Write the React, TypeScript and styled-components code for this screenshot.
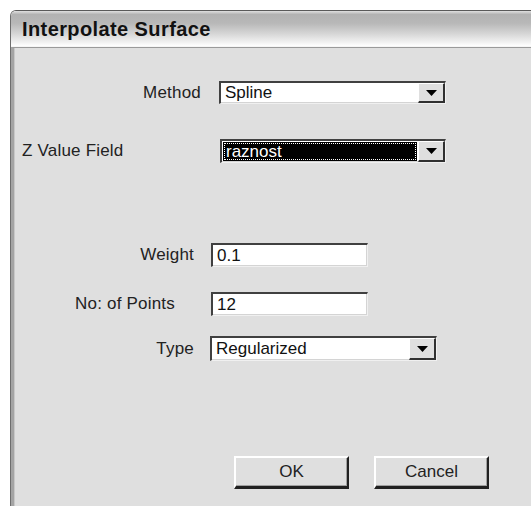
import React from "react";
import styled, { createGlobalStyle } from "styled-components";

const GlobalStyle = createGlobalStyle`
  html, body {
    margin: 0;
    padding: 0;
    background: #ffffff;
    overflow: hidden;
  }
  body {
    font-family: "Liberation Sans", Arial, sans-serif;
  }
`;

const Window = styled.div`
  margin: 10px 0 0 10px;
  width: 540px;
  height: 496px;
  display: flex;
  flex-direction: column;
  border-top: 1px solid #5a5a5a;
  border-left: 1px solid #6e6e6e;
  border-top-left-radius: 6px;
  overflow: hidden;
`;

const TitleBar = styled.div`
  height: 35px;
  display: flex;
  align-items: center;
  padding-left: 11px;
  background: linear-gradient(
    to bottom,
    #e0e0e0 0%,
    #b2b2b2 10%,
    #b8b8b8 35%,
    #d6d6d6 65%,
    #f2f2f2 90%,
    #ffffff 100%
  );
  border-bottom: 1px solid #f6f6f6;
`;

const Title = styled.span`
  font-size: 20px;
  font-weight: bold;
  letter-spacing: 0.4px;
  color: #111111;
  padding-top: 2px;
`;

const Body = styled.div`
  flex: 1;
  background: #dfdfdf;
  border-top: 1px solid #9a9a9a;
  border-left: 3px solid #a4a4a4;
  box-shadow: inset 1px 0 0 #c8c8c8;
  padding-top: 33px;
`;

const Row = styled.div<{ $top: number }>`
  display: flex;
  align-items: center;
  margin-top: ${(p) => p.$top}px;
`;

const Label = styled.label<{ $width: number; $gap: number; $align?: string; $pad?: number }>`
  box-sizing: border-box;
  width: ${(p) => p.$width}px;
  margin-right: ${(p) => p.$gap}px;
  padding-left: ${(p) => p.$pad ?? 0}px;
  text-align: ${(p) => p.$align ?? "right"};
  font-size: 17px;
  letter-spacing: 0.2px;
  color: #222222;
  white-space: nowrap;
`;

const Sunken = styled.div<{ $width: number; $height: number }>`
  box-sizing: border-box;
  width: ${(p) => p.$width}px;
  height: ${(p) => p.$height}px;
  display: flex;
  align-items: stretch;
  background: #ffffff;
  border-top: 2px solid #404040;
  border-left: 2px solid #404040;
  border-right: 1px solid #f0f0f0;
  border-bottom: 1px solid #f0f0f0;
  box-shadow: inset -1px -1px 0 #d4d4d4;
`;

const FieldText = styled.div<{ $selected?: boolean }>`
  flex: 1;
  display: flex;
  align-items: center;
  padding-left: 3px;
  margin: 1px;
  font-size: 17px;
  color: ${(p) => (p.$selected ? "#ffffff" : "#111111")};
  background: ${(p) => (p.$selected ? "#000000" : "transparent")};
  outline: ${(p) => (p.$selected ? "1px dotted #ffffff" : "none")};
  outline-offset: -2px;
`;

const DropButton = styled.div`
  box-sizing: border-box;
  width: 27px;
  display: flex;
  align-items: center;
  justify-content: center;
  background: #dfdfdf;
  border-top: 1px solid #ffffff;
  border-left: 1px solid #ffffff;
  border-right: 2px solid #303030;
  border-bottom: 2px solid #303030;
`;

const ButtonRow = styled.div`
  display: flex;
  gap: 25px;
  padding-left: 220px;
  margin-top: 95px;
`;

const PushButton = styled.button`
  box-sizing: border-box;
  width: 115px;
  height: 33px;
  background: #dfdfdf;
  border-top: 2px solid #ffffff;
  border-left: 2px solid #ffffff;
  border-right: 2px solid #202020;
  border-bottom: 3px solid #202020;
  box-shadow: inset -1px -1px 0 #a0a0a0;
  font-family: "Liberation Sans", Arial, sans-serif;
  font-size: 17px;
  color: #222222;
  padding: 0;
`;

const Arrow = () => (
  <svg width="11" height="6" viewBox="0 0 11 6">
    <path d="M0 0 H11 L5.5 6 Z" fill="#000000" />
  </svg>
);

interface ComboProps {
  value: string;
  width: number;
  height: number;
  selected?: boolean;
}

const Combo = ({ value, width, height, selected }: ComboProps) => (
  <Sunken $width={width} $height={height}>
    <FieldText $selected={selected}>{value}</FieldText>
    <DropButton>
      <Arrow />
    </DropButton>
  </Sunken>
);

const TextField = ({ value }: { value: string }) => (
  <Sunken $width={157} $height={24}>
    <FieldText>{value}</FieldText>
  </Sunken>
);

export default function App() {
  return (
    <>
      <GlobalStyle />
      <Window>
        <TitleBar>
          <Title>Interpolate Surface</Title>
        </TitleBar>
        <Body>
          <Row $top={0}>
            <Label $width={187} $gap={18}>Method</Label>
            <Combo value="Spline" width={227} height={23} />
          </Row>
          <Row $top={35}>
            <Label $width={206} $gap={0} $align="left" $pad={8}>
              Z Value Field
            </Label>
            <Combo value="raznost" width={226} height={24} selected />
          </Row>
          <Row $top={80}>
            <Label $width={180} $gap={17}>Weight</Label>
            <TextField value="0.1" />
          </Row>
          <Row $top={25}>
            <Label $width={161} $gap={36}>No: of Points</Label>
            <TextField value="12" />
          </Row>
          <Row $top={20}>
            <Label $width={180} $gap={16}>Type</Label>
            <Combo value="Regularized" width={227} height={25} />
          </Row>
          <ButtonRow>
            <PushButton>OK</PushButton>
            <PushButton>Cancel</PushButton>
          </ButtonRow>
        </Body>
      </Window>
    </>
  );
}
